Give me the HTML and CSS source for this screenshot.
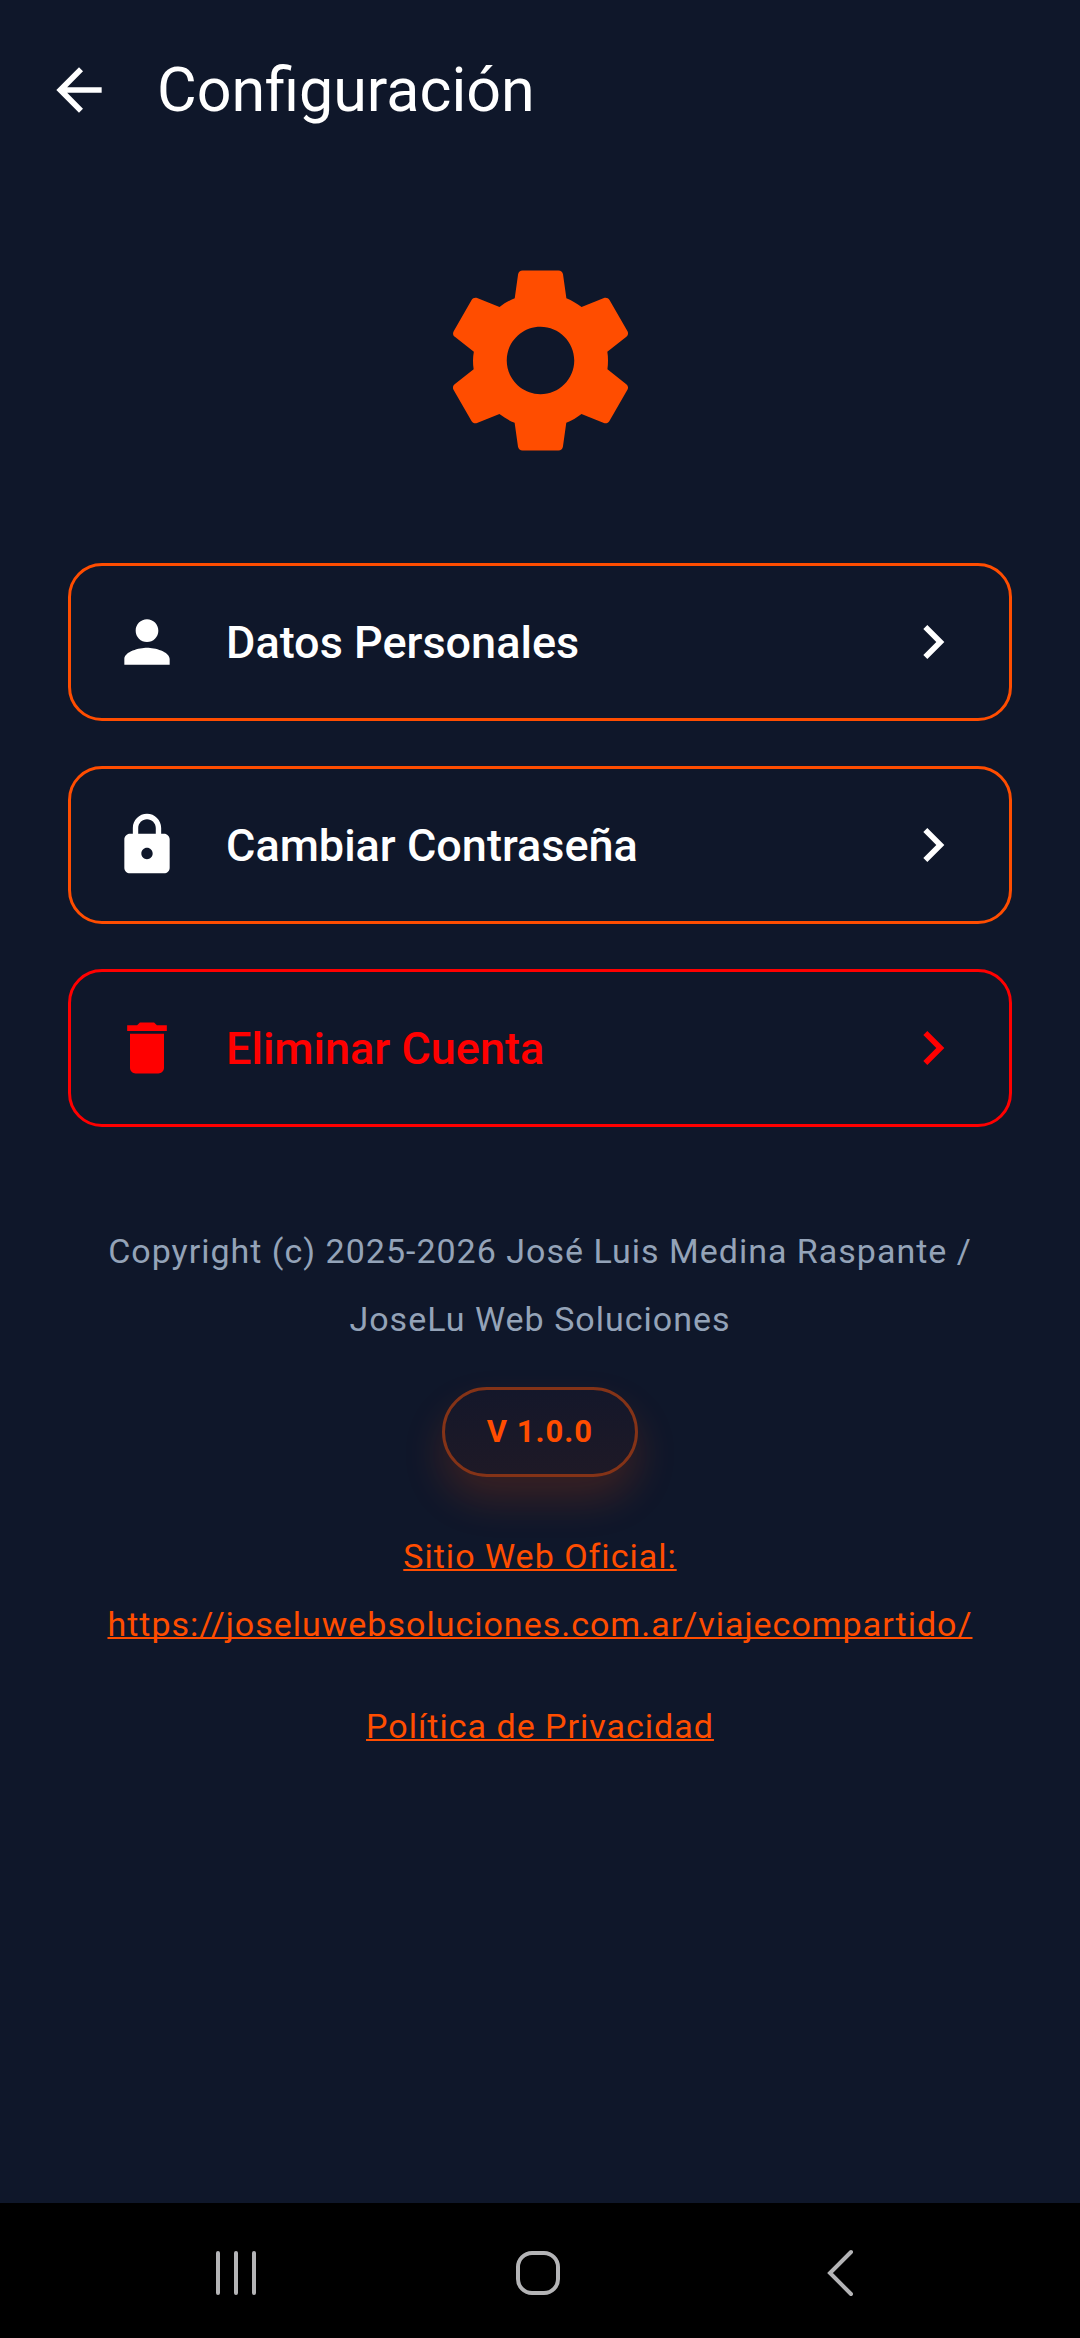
FILE: index.html
```html
<!DOCTYPE html>
<html lang="es">
<head>
  <meta charset="UTF-8" />
  <title>Configuración</title>
  <meta name="viewport" content="width=device-width, initial-scale=1.0" />
  <link rel="stylesheet" href="styles.css">
</head>
<body>
  <header class="app-bar">
    <button class="back-btn" aria-label="Volver">
      <svg class="icon" viewBox="0 0 24 24"><path d="M20 11H7.83l5.59-5.59L12 4l-8 8 8 8 1.41-1.41L7.83 13H20v-2z"/></svg>
    </button>
    <h1>Configuración</h1>
  </header>

  <main>
    <svg class="gear" viewBox="0 0 24 24" aria-hidden="true">
      <path d="M19.14 12.94c.04-.3.06-.61.06-.94 0-.32-.02-.64-.07-.94l2.03-1.58c.18-.14.23-.41.12-.61l-1.92-3.32c-.12-.22-.37-.29-.59-.22l-2.39.96c-.5-.38-1.03-.7-1.62-.94L14.4 2.81c-.04-.24-.24-.41-.48-.41h-3.84c-.24 0-.43.17-.47.41L9.25 5.35C8.66 5.59 8.12 5.92 7.63 6.29L5.24 5.33c-.22-.08-.47 0-.59.22L2.74 8.87c-.12.21-.08.47.12.61l2.03 1.58c-.05.3-.09.63-.09.94s.02.64.07.94l-2.03 1.58c-.18.14-.23.41-.12.61l1.92 3.32c.12.22.37.29.59.22l2.39-.96c.5.38 1.03.7 1.62.94l.36 2.54c.05.24.24.41.48.41h3.84c.24 0 .44-.17.47-.41l.36-2.54c.59-.24 1.13-.56 1.62-.94l2.39.96c.22.08.47 0 .59-.22l1.92-3.32c.12-.22.07-.47-.12-.61l-2.01-1.58zM12 15.6c-1.98 0-3.6-1.62-3.6-3.6s1.62-3.6 3.6-3.6 3.6 1.62 3.6 3.6-1.62 3.6-3.6 3.6z"/>
    </svg>

    <!-- Account options -->
    <div class="options">
      <button class="option">
        <svg class="icon" viewBox="0 0 24 24"><path d="M12 12c2.21 0 4-1.79 4-4s-1.79-4-4-4-4 1.79-4 4 1.79 4 4 4zm0 2c-2.67 0-8 1.34-8 4v2h16v-2c0-2.66-5.33-4-8-4z"/></svg>
        <span class="option-label">Datos Personales</span>
        <svg class="icon" viewBox="0 0 24 24"><path d="M10 6L8.59 7.41 13.17 12l-4.58 4.59L10 18l6-6z"/></svg>
      </button>
      <button class="option">
        <svg class="icon" viewBox="0 0 24 24"><path d="M18 8h-1V6c0-2.76-2.24-5-5-5S7 3.24 7 6v2H6c-1.1 0-2 .9-2 2v10c0 1.1.9 2 2 2h12c1.1 0 2-.9 2-2V10c0-1.1-.9-2-2-2zm-6 9c-1.1 0-2-.9-2-2s.9-2 2-2 2 .9 2 2-.9 2-2 2zm3.1-9H8.9V6c0-1.71 1.39-3.1 3.1-3.1s3.1 1.39 3.1 3.1v2z"/></svg>
        <span class="option-label">Cambiar Contraseña</span>
        <svg class="icon" viewBox="0 0 24 24"><path d="M10 6L8.59 7.41 13.17 12l-4.58 4.59L10 18l6-6z"/></svg>
      </button>
      <button class="option danger">
        <svg class="icon" viewBox="0 0 24 24"><path d="M6 19c0 1.1.9 2 2 2h8c1.1 0 2-.9 2-2V7H6v12zM19 4h-3.5l-1-1h-5l-1 1H5v2h14V4z"/></svg>
        <span class="option-label">Eliminar Cuenta</span>
        <svg class="icon" viewBox="0 0 24 24"><path d="M10 6L8.59 7.41 13.17 12l-4.58 4.59L10 18l6-6z"/></svg>
      </button>
    </div>

    <!-- About -->
    <footer class="about">
      <p>Copyright (c) 2025-2026 José Luis Medina Raspante / JoseLu Web Soluciones</p>
      <span class="version">V 1.0.0</span>
      <a href="https://joseluwebsoluciones.com.ar/viajecompartido/">Sitio Web Oficial: https://joseluwebsoluciones.com.ar/viajecompartido/</a>
      <a class="privacy" href="#">Política de Privacidad</a>
    </footer>
  </main>

  <!-- System navigation -->
  <nav class="system-nav">
    <button aria-label="Recientes">
      <svg viewBox="0 0 48 48"><path d="M6 4v40M24 4v40M42 4v40"/></svg>
    </button>
    <button aria-label="Inicio">
      <svg viewBox="0 0 48 48"><rect x="4" y="4" width="40" height="40" rx="14"/></svg>
    </button>
    <button aria-label="Atrás">
      <svg viewBox="0 0 48 48"><path d="M35 3L14 24l21 21"/></svg>
    </button>
  </nav>
</body>
</html>
```
FILE: styles.css
```css
* {
  box-sizing: border-box;
  margin: 0;
  padding: 0;
}

body {
  min-height: 100vh;
  display: flex;
  flex-direction: column;
  font-family: Roboto, sans-serif;
  background: #0f172a;
  color: #fff;
}

button {
  border: none;
  background: none;
  color: inherit;
  font: inherit;
  cursor: pointer;
}

.icon {
  display: block;
  flex: none;
  width: 68px;
  height: 68px;
  fill: currentColor;
}

/* App bar */
.app-bar {
  display: flex;
  align-items: center;
  gap: 44px;
  height: 180px;
  padding: 0 45px;
}

.app-bar h1 {
  font-size: 61px;
  font-weight: 400;
  line-height: 68px;
}

main {
  flex: 1;
  display: flex;
  flex-direction: column;
  align-items: center;
  padding: 68px;
}

.gear {
  width: 225px;
  height: 225px;
  margin-bottom: 90px;
  fill: #ff4d00;
}

/* Option cards */
.options {
  display: flex;
  flex-direction: column;
  gap: 45px;
  width: 100%;
  margin-bottom: 90px;
}

.option {
  display: flex;
  align-items: center;
  gap: 45px;
  padding: 42px;
  border: 3px solid #ff4d00;
  border-radius: 34px;
}

.option-label {
  flex: 1;
  font-size: 45px;
  font-weight: 500;
  text-align: left;
}

.danger {
  border-color: #f00;
  color: #f00;
}

/* About */
.about {
  display: flex;
  flex-direction: column;
  align-items: center;
  font-size: 34px;
  line-height: 68px;
  letter-spacing: 1px;
  text-align: center;
  color: #94a3b8;
}

.about a {
  color: #ff4d00;
  text-decoration-thickness: 2px;
  text-decoration-skip-ink: none;
}

.version {
  margin: 34px 0 45px;
  padding: 0 42px;
  border: 3px solid #843317;
  border-radius: 45px;
  background: linear-gradient(#14172a, #1e1926);
  box-shadow: 0 22px 40px rgba(255, 77, 0, 0.18);
  color: #ff4d00;
  font-size: 31px;
  font-weight: 700;
  line-height: 84px;
}

.privacy {
  margin-top: 34px;
}

/* System navigation */
.system-nav {
  display: grid;
  grid-template-columns: repeat(3, 1fr);
  height: 135px;
  padding: 4px 89px 0 85px;
  background: #000;
}

.system-nav button {
  display: flex;
  align-items: center;
  justify-content: center;
}

.system-nav svg {
  width: 48px;
  height: 48px;
  fill: none;
  stroke: #b4b4b6;
  stroke-width: 4;
  stroke-linecap: round;
}
```
